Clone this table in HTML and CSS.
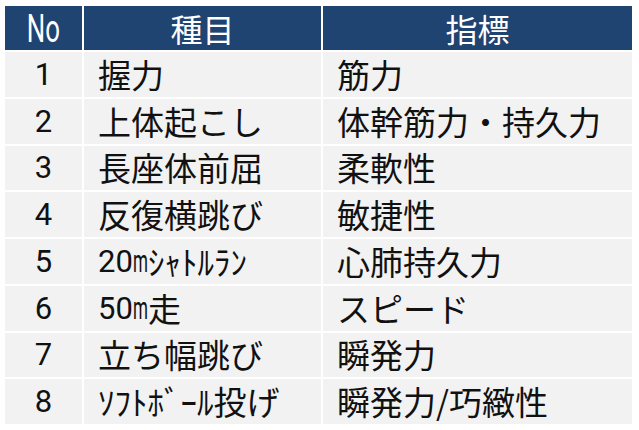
FILE: index.html
```html
<!DOCTYPE html>
<html lang="ja">
<head>
<meta charset="utf-8">
<link rel="stylesheet" href="styles.css">
</head>
<body>
<div class="table">
  <div class="cell head"><span class="no-head">No</span></div>
  <div class="cell head center">種目</div>
  <div class="cell head center">指標</div>

  <div class="cell num">1</div><div class="cell">握力</div><div class="cell">筋力</div>
  <div class="cell num">2</div><div class="cell">上体起こし</div><div class="cell">体幹筋力・持久力</div>
  <div class="cell num">3</div><div class="cell">長座体前屈</div><div class="cell">柔軟性</div>
  <div class="cell num">4</div><div class="cell">反復横跳び</div><div class="cell">敏捷性</div>
  <div class="cell num">5</div><div class="cell"><span class="lat">20</span><span class="m">m</span>ｼｬﾄﾙﾗﾝ</div><div class="cell">心肺持久力</div>
  <div class="cell num">6</div><div class="cell"><span class="lat">50</span><span class="m">m</span>走</div><div class="cell">スピード</div>
  <div class="cell num">7</div><div class="cell">立ち幅跳び</div><div class="cell">瞬発力</div>
  <div class="cell num">8</div><div class="cell">ｿﾌﾄﾎﾞｰﾙ投げ</div><div class="cell">瞬発力/巧緻性</div>
</div>
</body>
</html>
```

FILE: styles.css
```css
html, body {
  margin: 0;
  padding: 0;
  background: #ffffff;
}
body {
  width: 639px;
  height: 430px;
  overflow: hidden;
  font-family: "Noto Sans CJK JP", "Noto Sans", sans-serif;
}
.table {
  display: grid;
  grid-template-columns: 77px 237px 309px;
  grid-template-rows: 44px repeat(8, 44.75px);
  gap: 2px;
  padding: 6px 0 0 5px;
}
.cell {
  background: #f2f2f2;
  color: #111111;
  font-size: 33px;
  display: flex;
  align-items: center;
  padding-left: 14px;
  white-space: nowrap;
  line-height: 1;
}
.head {
  background: #1f4472;
  color: #ffffff;
  justify-content: center;
  padding-left: 0;
  font-size: 32px;
}
.no-head {
  display: inline-block;
  font-family: "Roboto", "Liberation Sans", sans-serif;
  font-size: 38px;
  transform: scaleX(0.68);
  margin-top: 1px;
}
.num {
  justify-content: center;
  padding-left: 0;
  font-family: "Roboto", "Liberation Sans", sans-serif;
  font-size: 31px;
}
.lat {
  font-family: "Roboto", "Liberation Sans", sans-serif;
  font-size: 31px;
}
.m {
  display: inline-block;
  font-family: "Roboto", "Liberation Sans", sans-serif;
  font-size: 31px;
  transform: scaleX(0.55);
  transform-origin: left center;
  margin-right: -12px;
}
```
